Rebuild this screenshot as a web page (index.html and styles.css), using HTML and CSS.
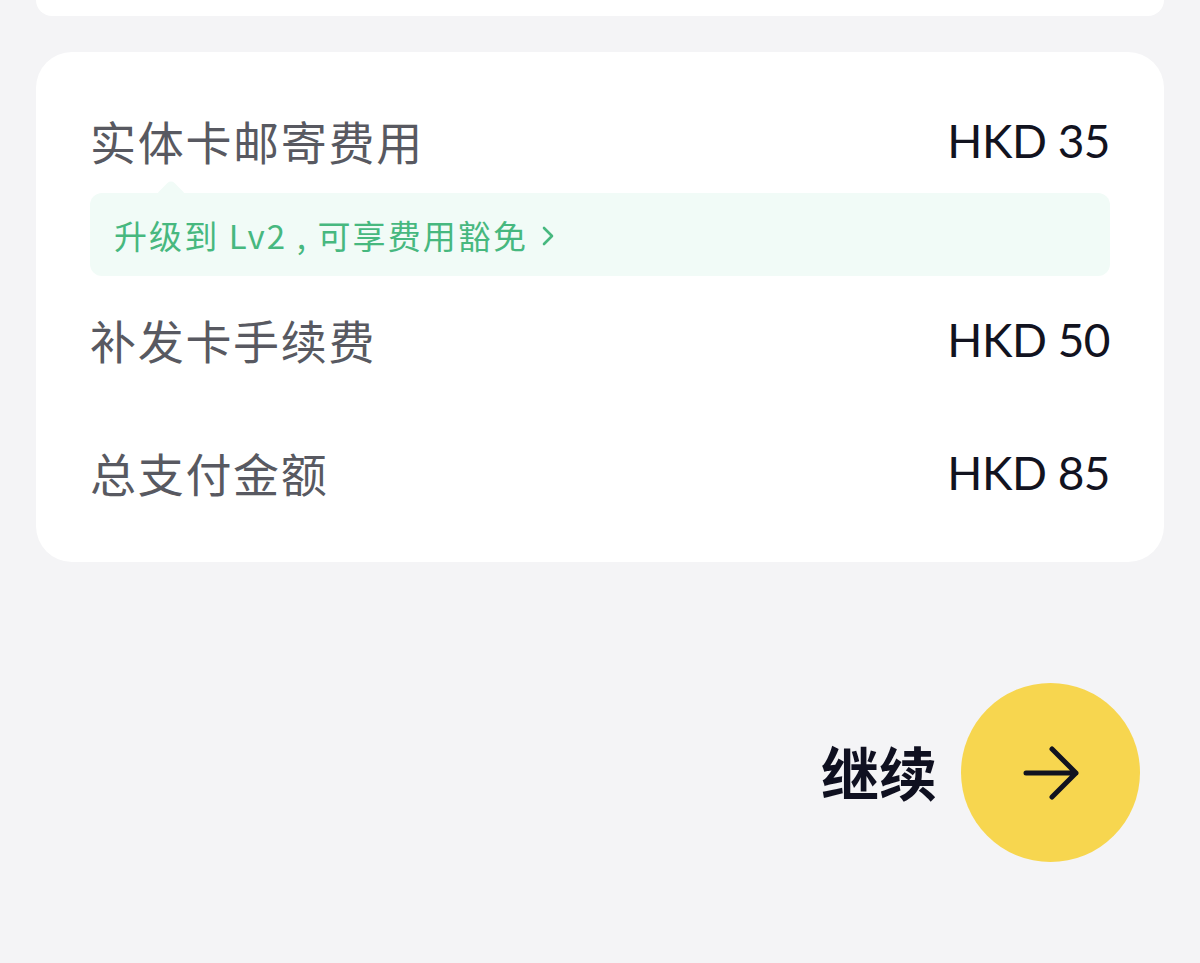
FILE: index.html
```html
<!DOCTYPE html>
<html lang="zh-CN">
<head>
<meta charset="utf-8">
<title>费用</title>
<link rel="stylesheet" href="styles.css">
</head>
<body>
<div class="page">
  <div class="card card-top"></div>
  <div class="card card-fees">
    <div class="row row-first">
      <span class="label">实体卡邮寄费用</span>
      <span class="value">HKD 35</span>
    </div>
    <div class="tip">
      <span class="tip-text">升级到 Lv2 , 可享费用豁免</span>
      <svg class="chev" width="14" height="24" viewBox="0 0 14 24"><path d="M3 4 L11 12 L3 20" fill="none" stroke="#47b87f" stroke-width="2.6" stroke-linecap="round" stroke-linejoin="round"/></svg>
    </div>
    <div class="row row-second">
      <span class="label">补发卡手续费</span>
      <span class="value">HKD 50</span>
    </div>
    <div class="row row-third">
      <span class="label">总支付金额</span>
      <span class="value">HKD 85</span>
    </div>
  </div>
  <div class="actions">
    <span class="continue">继续</span>
    <button class="go" type="button" aria-label="继续">
      <svg width="64" height="64" viewBox="0 0 64 64"><path d="M7 32 H57 M33 8 L57 32 L33 56" fill="none" stroke="#111320" stroke-width="5" stroke-linecap="round" stroke-linejoin="round"/></svg>
    </button>
  </div>
</div>
</body>
</html>
```
FILE: styles.css
```css
html, body {
  margin: 0;
  padding: 0;
  background: #f4f4f6;
}
body {
  font-family: "Noto Sans CJK SC", "Noto Sans", sans-serif;
  width: 1200px;
  height: 963px;
  overflow: hidden;
}
.page {
  padding: 0 36px;
}
.card {
  background: #ffffff;
  border-radius: 36px;
}
.card-top {
  height: 16px;
  border-radius: 0 0 36px 36px;
}
.card-fees {
  margin-top: 36px;
  padding: 49px 54px 51px;
}
.row {
  display: flex;
  justify-content: space-between;
  align-items: center;
  height: 78px;
}
.row-second {
  margin-top: 24px;
}
.row-third {
  margin-top: 55px;
}
.label {
  font-size: 46px;
  color: #585961;
  letter-spacing: 1.7px;
}
.value {
  font-family: "Lato", "Noto Sans", sans-serif;
  font-size: 46px;
  color: #12131f;
  letter-spacing: -0.5px;
}
.tip {
  position: relative;
  margin-top: 14px;
  height: 83px;
  background: #f1fbf7;
  border-radius: 12px;
  display: flex;
  align-items: center;
  padding-left: 24px;
  gap: 13px;
}
.tip::before {
  content: "";
  position: absolute;
  left: 70px;
  top: -9px;
  width: 22px;
  height: 22px;
  background: #f1fbf7;
  transform: rotate(45deg);
  border-radius: 5px;
}
.tip-text {
  position: relative;
  font-size: 33px;
  letter-spacing: 2.1px;
  color: #47b87f;
}
.chev {
  position: relative;
  margin-top: 2px;
}
.actions {
  display: flex;
  justify-content: flex-end;
  align-items: center;
  gap: 24px;
  margin-top: 121px;
  padding-right: 24px;
}
.continue {
  font-size: 58px;
  font-weight: 700;
  color: #0f1020;
  margin-bottom: 4px;
}
.go {
  width: 179px;
  height: 179px;
  border-radius: 50%;
  border: none;
  padding: 0;
  background: #f7d64f;
  display: flex;
  align-items: center;
  justify-content: center;
}
```
